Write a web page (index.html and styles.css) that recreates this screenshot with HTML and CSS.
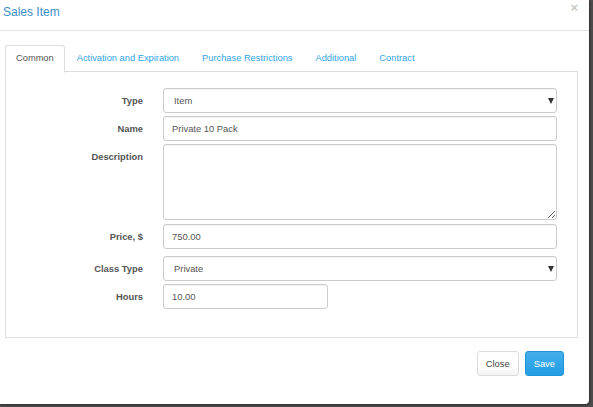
FILE: index.html
```html
<!DOCTYPE html>
<html>
<head>
<meta charset="utf-8">
<title>Sales Item</title>
<link rel="stylesheet" href="styles.css">
</head>
<body>
<div class="modal">
  <div class="modal-header">
    <h4 class="modal-title">Sales Item</h4>
    <span class="close">&times;</span>
  </div>
  <div class="modal-body">
    <ul class="tabs">
      <li class="tab active">Common</li>
      <li class="tab">Activation and Expiration</li>
      <li class="tab">Purchase Restrictions</li>
      <li class="tab">Additional</li>
      <li class="tab">Contract</li>
    </ul>
    <div class="pane">
      <div class="row">
        <label class="lbl">Type</label>
        <div class="select"><span class="select-text">Item</span></div>
      </div>
      <div class="row gap3">
        <label class="lbl">Name</label>
        <div class="input">Private 10 Pack</div>
      </div>
      <div class="row gap3">
        <label class="lbl">Description</label>
        <textarea class="textarea"></textarea>
      </div>
      <div class="row gap4">
        <label class="lbl">Price, $</label>
        <div class="input">750.00</div>
      </div>
      <div class="row gap7">
        <label class="lbl">Class Type</label>
        <div class="select"><span class="select-text">Private</span></div>
      </div>
      <div class="row gap3">
        <label class="lbl">Hours</label>
        <div class="input short">10.00</div>
      </div>
    </div>
    <div class="footer">
      <button class="btn btn-default">Close</button>
      <button class="btn btn-primary">Save</button>
    </div>
  </div>
</div>
</body>
</html>
```

FILE: styles.css
```css
html, body {
  margin: 0;
  padding: 0;
}
body {
  background: #4c4c4c;
  width: 593px;
  height: 407px;
  overflow: hidden;
  font-family: "Liberation Sans", Arial, sans-serif;
  font-size: 9.4px;
  color: #555;
}
.modal {
  width: 589px;
  height: 404px;
  background: #fff;
  border-bottom-right-radius: 4px;
  box-sizing: border-box;
  box-shadow: 1px 1px 2px rgba(0,0,0,0.4);
}
.modal-header {
  border-bottom: 1px solid #e5e5e5;
  display: flex;
  justify-content: space-between;
  align-items: flex-start;
  padding: 5px 11px 0 3px;
  height: 25px;
}
.modal-title {
  margin: 0;
  font-size: 12px;
  font-weight: normal;
  line-height: 15px;
  color: #3a8fc8;
}
.close {
  font-size: 13px;
  line-height: 10px;
  font-weight: bold;
  color: #c8c8c8;
  margin-top: -2px;
}
.modal-body {
  padding: 14px 11px 0 5px;
}
.tabs {
  list-style: none;
  margin: 0;
  padding: 0;
  display: flex;
  height: 26px;
  border-bottom: 1px solid #ddd;
  font-size: 9.3px;
}
.tab {
  padding: 0 10px;
  line-height: 25px;
  height: 25px;
  border: 1px solid transparent;
  border-radius: 3px 3px 0 0;
  margin-right: 1px;
  color: #2fa4e7;
  white-space: nowrap;
}
.tab.active {
  color: #555;
  background: #fff;
  border-color: #ddd #ddd transparent;
  height: 26px;
}
.pane {
  border: 1px solid #ddd;
  border-top: none;
  padding: 16px 0 28px 0;
}
.row {
  display: grid;
  grid-template-columns: 137px 394px;
  column-gap: 20px;
  align-items: start;
}
.gap3 { margin-top: 3px; }
.gap4 { margin-top: 4px; }
.gap7 { margin-top: 7px; }
.lbl {
  text-align: right;
  font-weight: bold;
  line-height: 25px;
  color: #555;
}
.input, .select, .textarea {
  box-sizing: border-box;
  height: 25px;
  border: 1px solid #ccc;
  border-radius: 3px;
  background: #fff;
  box-shadow: inset 0 1px 1px rgba(0,0,0,0.05);
  color: #555;
  line-height: 23px;
  padding: 0 8px;
  font-size: 9.4px;
  font-family: "Liberation Sans", Arial, sans-serif;
}
.input.short {
  width: 165px;
}
.select {
  position: relative;
  padding-left: 10px;
}
.select::after {
  content: "";
  position: absolute;
  right: 2px;
  top: 9px;
  border-left: 3px solid transparent;
  border-right: 3px solid transparent;
  border-top: 6px solid #333;
}
.textarea {
  height: 76px;
  width: 394px;
  margin: 0;
  resize: vertical;
  display: block;
}
.footer {
  display: flex;
  justify-content: flex-end;
  gap: 6px;
  margin-top: 13px;
  padding-right: 14px;
}
.btn {
  height: 25px;
  padding: 0 8px;
  border-radius: 3px;
  font-family: "Liberation Sans", Arial, sans-serif;
  font-size: 9.4px;
  line-height: 23px;
  border: 1px solid #ddd;
}
.btn-default {
  color: #444;
  background: linear-gradient(#fff, #fff 60%, #f3f3f3);
  border-color: #dcdcdc;
}
.btn-primary {
  color: #fff;
  background: linear-gradient(#45aeea, #2fa4e7 60%, #239de3);
  border-color: #1e94d8;
}
```
